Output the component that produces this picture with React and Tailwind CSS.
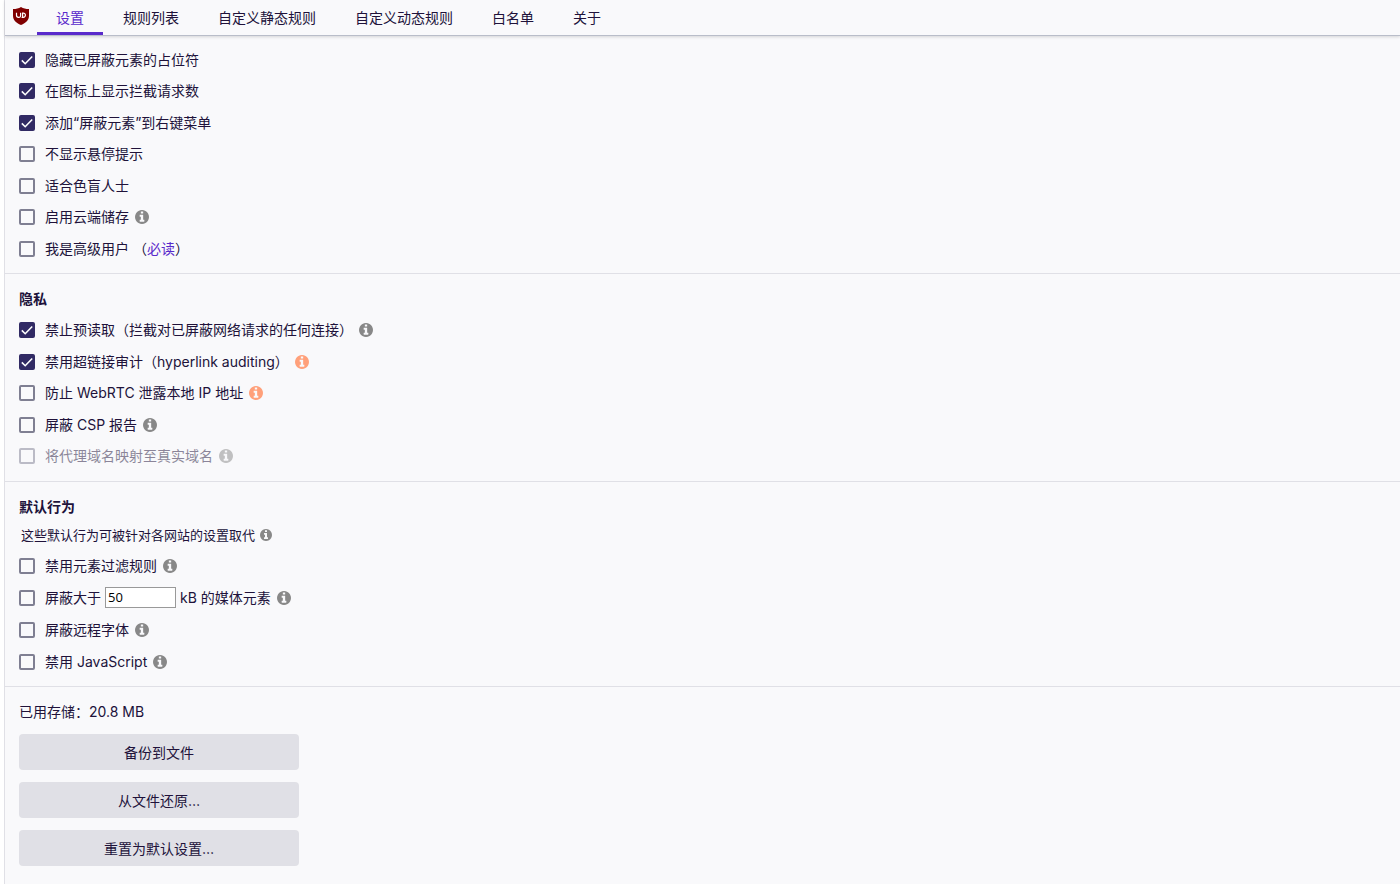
import React, { useState } from 'react';

const TABS = ['设置', '规则列表', '自定义静态规则', '自定义动态规则', '白名单', '关于'];

const Logo = () => (
  <svg viewBox="0 0 16 18" className="w-4 h-[18px]" aria-hidden="true">
    <path
      d="M8 0C5.600 1.500 3.200 2 0 2v6.400c0 4.600 3 7.400 8 9.600 5-2.200 8-5 8-9.600V2C12.800 2 10.400 1.500 8 0z"
      fill="#800000"
    />
    <path
      d="M3.500 5.700v2.600a2 2 0 0 0 2 2h0.600a1.500 1.500 0 0 0 1.500-1.500V5.700"
      fill="none"
      stroke="#fff"
      strokeWidth="1.200"
    />
    <path
      d="M8.600 10.300h1.700a2.100 2.100 0 0 0 2.100-2.300 2 2 0 0 0-2.100-1.900H9.600v4.200"
      fill="none"
      stroke="#fff"
      strokeWidth="1.200"
    />
  </svg>
);

const Info = ({ warn, small }) => (
  <svg
    viewBox="0 0 1536 1536"
    fill="currentColor"
    aria-hidden="true"
    className={`shrink-0 ${small ? 'size-3 ml-[5px]' : 'size-[14px] ml-[6px]'} ${
      warn ? 'text-[#ffa07a]' : 'text-[#888888]'
    }`}
  >
    <path d="M1024 1248v-160q0-14-9-23t-23-9h-96v-512q0-14-9-23t-23-9h-320q-14 0-23 9t-9 23v160q0 14 9 23t23 9h96v320h-96q-14 0-23 9t-9 23v160q0 14 9 23t23 9h448q14 0 23-9t9-23zm-128-896v-160q0-14-9-23t-23-9h-192q-14 0-23 9t-9 23v160q0 14 9 23t23 9h192q14 0 23-9t9-23zm640 416q0 209-103 385.500t-279.500 279.500-385.500 103-385.500-103-279.500-279.500-103-385.500 103-385.500 279.500-279.500 385.500-103 385.500 103 279.500 279.500 103 385.500z" />
  </svg>
);

const Option = ({ id, checked: initial = false, disabled = false, info, warn, extra, short, children }) => {
  const [checked, setChecked] = useState(initial);

  return (
    <li className={`flex items-start ${short ? 'h-[31px]' : 'h-8'} ${disabled ? 'opacity-50' : ''}`}>
      <span className="relative mt-[3px] mr-[10px] size-4 shrink-0">
        <input
          id={id}
          type="checkbox"
          checked={checked}
          disabled={disabled}
          onChange={(e) => setChecked(e.target.checked)}
          className="block size-4 appearance-none rounded-xs border-2 border-[#7f7f92] checked:border-[#312a64] checked:bg-[#312a64]"
        />
        {checked && (
          <svg viewBox="0 0 16 16" className="pointer-events-none absolute inset-0 size-4">
            <path d="M2.800 8.400l3.400 3.300 7-7.200" fill="none" stroke="#fff" strokeWidth="1.600" />
          </svg>
        )}
      </span>
      <div className="flex items-center leading-[21px]">
        <label htmlFor={id}>{children}</label>
        {extra}
        {info && <Info warn={warn} />}
      </div>
    </li>
  );
};

const Action = ({ children }) => (
  <button type="button" className="h-9 w-[280px] rounded-sm bg-[#e0e0e6] pt-px text-center">
    {children}
  </button>
);

export default function App() {
  const [active, setActive] = useState(TABS[0]);
  const [size, setSize] = useState('50');

  return (
    <div className="bg-white pl-1 text-sm text-[#20123a] font-[Inter,'Noto_Sans_CJK_SC',sans-serif] font-normal">
      <div className="min-h-screen border-l border-[#e0e0e6] bg-[#f9f9fb]">
        <header className="flex h-9 items-stretch border-b border-[#b9bdc9] shadow-[0_1px_3px_rgba(0,0,0,0.15)]">
          <div className="mr-2 ml-2 pt-[7px]">
            <Logo />
          </div>
          <nav className="flex gap-px">
            {TABS.map((tab) => (
              <button
                key={tab}
                type="button"
                onClick={() => setActive(tab)}
                className={`border-b-3 px-[19px] pt-[3px] leading-[21px] ${
                  tab === active ? 'border-[#592acb] text-[#592acb]' : 'border-transparent'
                }`}
              >
                {tab}
              </button>
            ))}
          </nav>
        </header>

        <main>
          <section className="border-b border-[#e0e0e6] px-[14px] pt-[13px] pb-1">
            <ul>
              <Option id="collapse" checked short>隐藏已屏蔽元素的占位符</Option>
              <Option id="badge" checked>在图标上显示拦截请求数</Option>
              <Option id="context-menu" checked short>添加“屏蔽元素”到右键菜单</Option>
              <Option id="tooltips">不显示悬停提示</Option>
              <Option id="color-blind" short>适合色盲人士</Option>
              <Option id="cloud" info>启用云端储存</Option>
              <Option
                id="advanced"
                short
                extra={
                  <span className="ml-1">
                    （<a href="#advanced" className="text-[#592acb]">必读</a>）
                  </span>
                }
              >
                我是高级用户
              </Option>
            </ul>
          </section>

          <section className="border-b border-[#e0e0e6] px-[14px] pt-[14px] pb-1">
            <h3 className="mb-[10px] font-semibold leading-[21px]">隐私</h3>
            <ul>
              <Option id="prefetch" checked info>禁止预读取（拦截对已屏蔽网络请求的任何连接）</Option>
              <Option id="auditing" checked info warn short>禁用超链接审计（hyperlink auditing）</Option>
              <Option id="webrtc" info warn>防止 WebRTC 泄露本地 IP 地址</Option>
              <Option id="csp" info short>屏蔽 CSP 报告</Option>
              <Option id="cname" disabled info>将代理域名映射至真实域名</Option>
            </ul>
          </section>

          <section className="border-b border-[#e0e0e6] px-[14px] pt-[14px] pb-[3px]">
            <h3 className="mb-2 font-semibold leading-[21px]">默认行为</h3>
            <p className="mb-[10px] flex items-center pl-[2px] text-[13px] leading-5">
              这些默认行为可被针对各网站的设置取代
              <Info small />
            </p>
            <ul>
              <Option id="cosmetic" info>禁用元素过滤规则</Option>
              <Option
                id="media"
                info
                extra={
                  <>
                    <input
                      type="text"
                      aria-label="kB"
                      value={size}
                      onChange={(e) => setSize(e.target.value)}
                      className="mx-1 h-[21px] w-[71px] border border-[#999999] bg-white px-[2px] font-['Open_Sans',sans-serif] text-[13px] text-black"
                    />
                    <span>kB 的媒体元素</span>
                  </>
                }
              >
                屏蔽大于
              </Option>
              <Option id="fonts" info>屏蔽远程字体</Option>
              <Option id="javascript" info>禁用 JavaScript</Option>
            </ul>
          </section>

          <section className="px-[14px] pt-[14px] pb-[18px]">
            <p className="mb-3 leading-[21px]">已用存储：20.8 MB</p>
            <div className="flex flex-col items-start gap-3">
              <Action>备份到文件</Action>
              <Action>从文件还原…</Action>
              <Action>重置为默认设置…</Action>
            </div>
          </section>
        </main>
      </div>
    </div>
  );
}
